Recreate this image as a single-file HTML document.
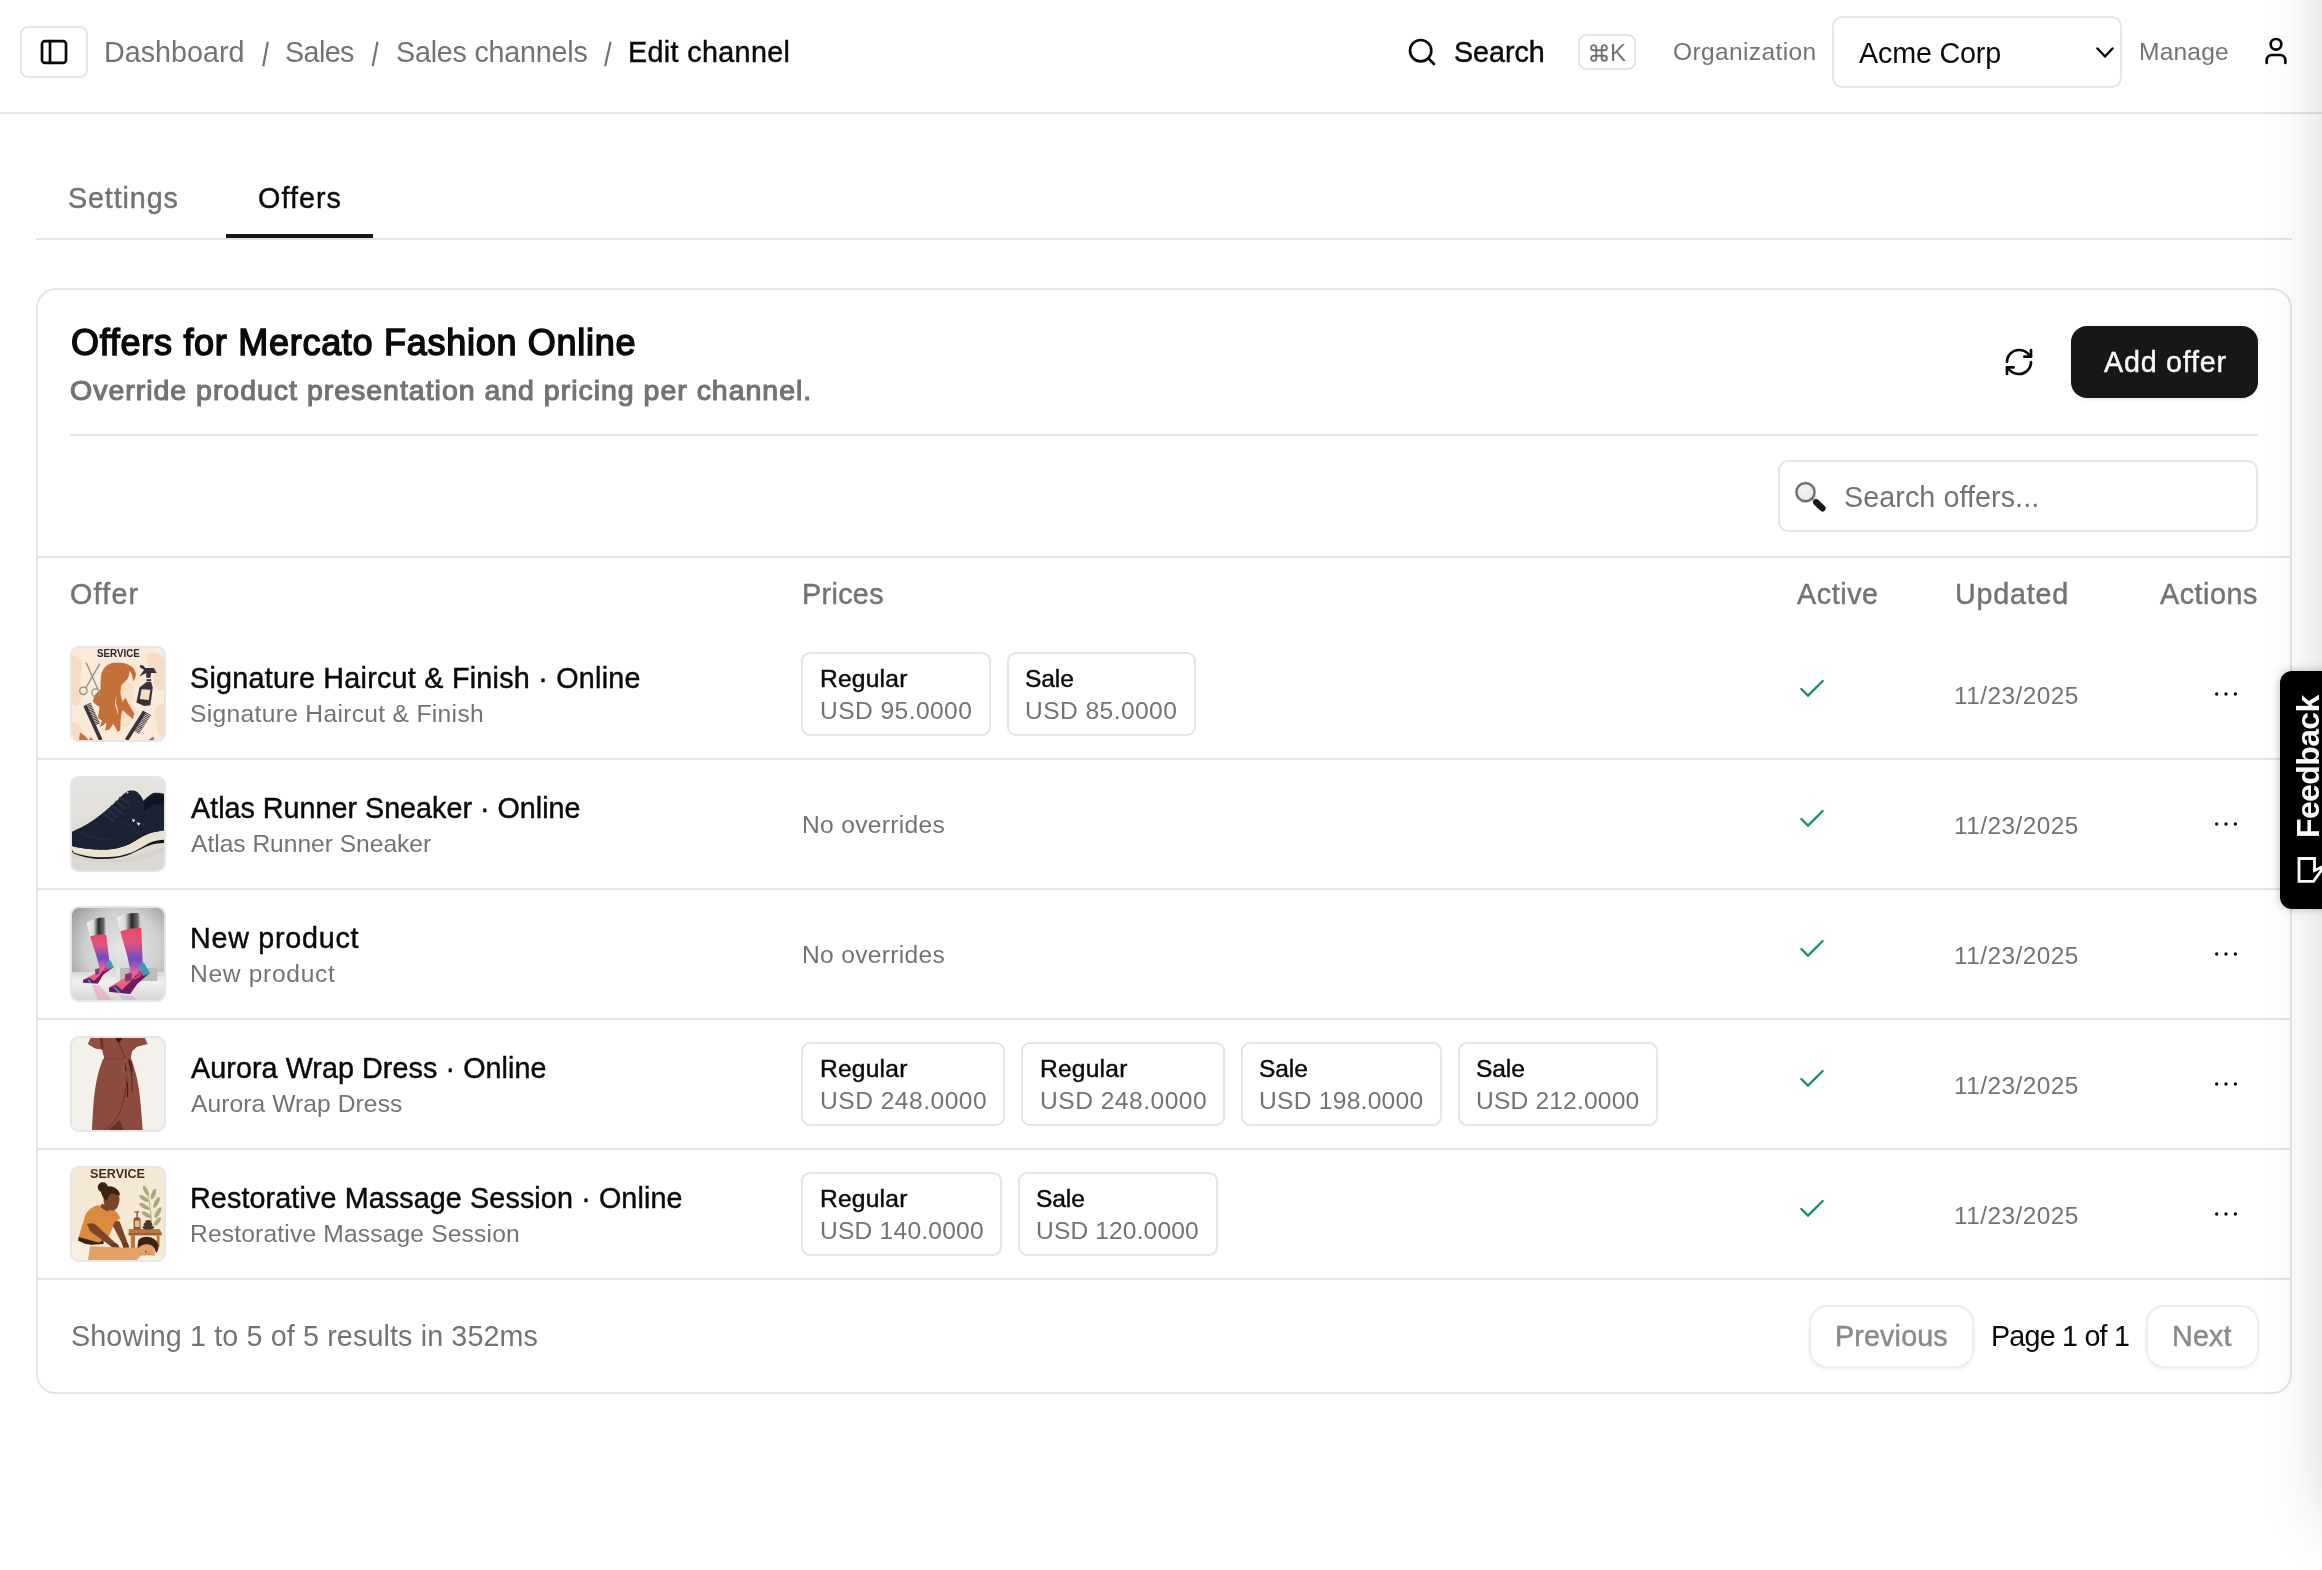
<!DOCTYPE html>
<html lang="en">
<head>
<meta charset="utf-8">
<title>Edit channel</title>
<style>
*{box-sizing:border-box;margin:0;padding:0}
html,body{width:2322px;height:1570px;overflow:hidden;background:#fff}
body{font-family:"Liberation Sans",sans-serif;color:#0a0a0a;position:relative;-webkit-font-smoothing:antialiased}
.a{position:absolute;white-space:pre;line-height:1;will-change:transform}
.t29{font-size:28.7px}
.t25{font-size:24.6px}
.g{color:#737373}
.m{-webkit-text-stroke:0.45px currentColor}
.hl{position:absolute;height:2px;background:#e5e5e5}
.box{position:absolute;border:2px solid #e5e5e5;background:#fff}
svg{position:absolute;overflow:visible;will-change:transform}
.ic{fill:none;stroke:#0a0a0a;stroke-width:2;stroke-linecap:round;stroke-linejoin:round}
.thumb{position:absolute;left:70px;width:96px;height:96px;border:2px solid #e5e5e5;border-radius:9px;overflow:hidden;background:#f5f5f5}
.thumb svg{left:0;top:0;width:92px;height:92px}
.chip{position:absolute;height:84px;border:2px solid #e5e5e5;border-radius:9px;background:#fff}
.chip .l{position:absolute;left:16px;top:13px;font-size:25px;line-height:1;white-space:pre;-webkit-text-stroke:0.45px currentColor}
.chip .v{position:absolute;left:16px;top:45px;font-size:25px;line-height:1;white-space:pre;color:#737373}
</style>
</head>
<body>

<!-- ===== HEADER ===== -->
<div class="hl" style="left:0;top:112px;width:2322px"></div>
<div class="box" style="left:20px;top:26px;width:68px;height:52px;border-radius:8px"></div>
<svg style="left:38px;top:36px" width="32" height="32" viewBox="0 0 24 24"><g class="ic"><rect x="3" y="3.8" width="18" height="16.4" rx="2.2"/><path d="M9 3.8v16.4"/></g></svg>

<div class="a t29 g" style="left:104.40px;top:38.4px;letter-spacing:0.027px">Dashboard</div>
<svg style="left:0;top:0" width="1" height="1"><path d="M267.8 41.800 263.3 66.300" stroke="#737373" stroke-width="2.200" fill="none"/></svg>
<div class="a t29 g" style="left:285.00px;top:38.4px;letter-spacing:-0.604px">Sales</div>
<svg style="left:0;top:0" width="1" height="1"><path d="M377.5 41.800 372.7 66.300" stroke="#737373" stroke-width="2.200" fill="none"/></svg>
<div class="a t29 g" style="left:395.50px;top:38.4px;letter-spacing:-0.217px">Sales channels</div>
<svg style="left:0;top:0" width="1" height="1"><path d="M610.6 41.800 605.1 66.300" stroke="#737373" stroke-width="2.200" fill="none"/></svg>
<div class="a t29 m" style="left:628.23px;top:38.4px;letter-spacing:0.366px">Edit channel</div>

<svg style="left:1406px;top:35.6px" width="32" height="32" viewBox="0 0 24 24"><g class="ic"><circle cx="11" cy="11" r="8"/><path d="m21 21-4.3-4.3"/></g></svg>
<div class="a t29 m" style="left:1454.02px;top:38.4px;letter-spacing:-0.018px">Search</div>
<div class="box" style="left:1577.6px;top:33.6px;width:58px;height:36px;border-radius:8px"></div>
<svg style="left:1588.2px;top:41.9px" width="22" height="22" viewBox="0 0 24 24"><path fill="none" stroke="#737373" stroke-width="2.1" d="M9 9h6v6H9zM9 9V6.2a2.8 2.8 0 1 0-2.8 2.8H9M15 9h2.8A2.8 2.8 0 1 0 15 6.200V9M15 15v2.8a2.8 2.8 0 1 0 2.8-2.8H15M9 15H6.2A2.8 2.8 0 1 0 9 17.8V15"/></svg>
<div class="a g" style="left:1609.7px;top:41.3px;font-size:24px">K</div>
<div class="a t25 g" style="left:1672.60px;top:40px;letter-spacing:0.339px">Organization</div>
<div class="box" style="left:1832px;top:16px;width:290px;height:72px;border-radius:10px"></div>
<div class="a t29" style="left:1859.20px;top:38.7px;letter-spacing:-0.166px">Acme Corp</div>
<svg style="left:2096px;top:47px" width="18" height="12" viewBox="0 0 18 12"><path d="M1.5 1.5 9 9.5 16.500 1.5" fill="none" stroke="#0a0a0a" stroke-width="2.4" stroke-linecap="round" stroke-linejoin="round"/></svg>
<div class="a t25 g" style="left:2138.80px;top:40px;letter-spacing:0.160px">Manage</div>
<svg style="left:2260px;top:35px" width="32" height="32" viewBox="0 0 24 24"><g class="ic"><path d="M19 21v-2a4 4 0 0 0-4-4H9a4 4 0 0 0-4 4v2"/><circle cx="12" cy="7" r="4"/></g></svg>

<!-- ===== TABS ===== -->
<div class="a t29 g m" style="left:67.72px;top:184px;letter-spacing:0.891px">Settings</div>
<div class="a t29 m" style="left:257.73px;top:184px;letter-spacing:1.061px">Offers</div>
<div class="hl" style="left:36px;top:238px;width:2256px"></div>
<div class="hl" style="left:226px;top:234px;width:147px;height:4px;background:#171717"></div>

<!-- ===== CARD ===== -->
<div class="box" style="left:36px;top:288px;width:2256px;height:1106px;border-radius:20px"></div>
<div class="a" style="left:70.65px;top:324.6px;font-size:36px;-webkit-text-stroke:1.5px currentColor;letter-spacing:0.717px">Offers for Mercato Fashion Online</div>
<div class="a g" style="left:70.48px;top:376px;font-size:28.5px;-webkit-text-stroke:1.15px currentColor;letter-spacing:0.983px">Override product presentation and pricing per channel.</div>
<svg style="left:2003px;top:346px" width="32" height="32" viewBox="0 0 24 24"><g class="ic"><path d="M3 12a9 9 0 0 1 9-9 9.750 9.750 0 0 1 6.740 2.740L21 8"/><path d="M21 3v5h-5"/><path d="M21 12a9 9 0 0 1-9 9 9.750 9.750 0 0 1-6.740-2.740L3 16"/><path d="M8 16H3v5"/></g></svg>
<div class="a" style="left:2071px;top:326px;width:187px;height:72px;border-radius:16px;background:#171717;box-shadow:0 2px 3px rgba(0,0,0,.08)"></div>
<div class="a t29 m" style="left:2103.62px;top:348.2px;color:#fafafa;letter-spacing:0.776px">Add offer</div>
<div class="hl" style="left:70px;top:434px;width:2188px"></div>

<div class="box" style="left:1778px;top:460px;width:480px;height:72px;border-radius:10px"></div>
<svg style="left:1793px;top:480px" width="34" height="34" viewBox="0 0 34 34"><defs><radialGradient id="lens" cx=".45" cy=".4" r=".6"><stop offset="0" stop-color="#f6f6f6"/><stop offset="1" stop-color="#e3e4e6"/></radialGradient></defs><path d="M19.500 19 22.500 21.700" stroke="#8d9197" stroke-width="3.600" stroke-linecap="butt"/><path d="M23.300 22.400 29.500 28.300" stroke="#17181a" stroke-width="6.300" stroke-linecap="round"/><circle cx="12.500" cy="12.200" r="9.200" fill="url(#lens)" stroke="#666b72" stroke-width="2.600"/><circle cx="12.500" cy="12.200" r="10.400" fill="none" stroke="#c9ccd1" stroke-width=".7"/></svg>
<div class="a t29 g" style="left:1844.00px;top:483.2px;letter-spacing:0.078px">Search offers...</div>
<div class="hl" style="left:38px;top:556px;width:2252px"></div>

<!-- table header -->
<div class="a t29 g m" style="left:70.22px;top:580.2px;letter-spacing:1.215px">Offer</div>
<div class="a t29 g m" style="left:802.02px;top:580.2px;letter-spacing:0.358px">Prices</div>
<div class="a t29 g m" style="left:1797.22px;top:580.2px;letter-spacing:0.577px">Active</div>
<div class="a t29 g m" style="left:1954.62px;top:580.2px;letter-spacing:0.774px">Updated</div>
<div class="a t29 g m" style="left:2160.22px;top:580.2px;letter-spacing:0.553px">Actions</div>

<!-- ROWS inserted here -->
<div class="thumb" style="top:646px"><svg viewBox="0 0 92 92"><rect width="92" height="92" fill="#fbead9"/>
<path d="M0 8C8 6 12 14 9 24 6 34 12 42 8 54 5 60 2 58 0 56Z" fill="#f6dcc2"/>
<path d="M74 6c8-4 16 0 18 6v30c-6 2-12-4-10-12 1-8-8-10-8-24z" fill="#f6dcc2"/>
<path d="M92 56c-8 0-12 8-8 16 3 8-2 14 8 18z" fill="#f6dcc2"/>
<path d="M0 74c8 0 12 6 10 18H0z" fill="#f6dcc2"/>
<path d="M50 34c6-2 12 2 12 8s-2 10-3 16c2 6 3 14-3 20-6 4-10 0-10-6z" fill="#f7dfc8"/>
<text x="46.400" y="8.800" font-family="Liberation Sans,sans-serif" font-weight="700" font-size="10.500" text-anchor="middle" textLength="43" lengthAdjust="spacingAndGlyphs" fill="#2e2630">SERVICE</text>
<path d="M39.900 15.100C44 14.500 48 14.500 51.100 15.100 56 16 60.500 18.500 62.300 21.400 63.800 24 64 26.500 63.700 28.400 63.200 30.500 62 32.300 60.900 33.300 60.800 29 59.800 25 57.400 22.800 57.600 26 57 29 55.300 31.200 53.500 33.500 51 35 49.700 36.800 48.500 40.500 48.200 44.500 49 48 49.500 50.500 50.200 53 51 55 50.500 53 51.500 51 53.900 50.200 56 55.500 59.500 60.500 62.300 65.600L60.900 71.200C57.500 68.500 54 65.500 51 62 49.800 64 49.200 66.500 49 69 48.300 73.500 48.500 78 48.300 82.400L45.500 83.800C44.200 81 42.800 78.500 41.300 76 40 78 38.500 80 37 81.700L32.900 82.400C33.800 80 34.300 77.300 34.300 74.700 32 76.500 29.800 78.200 27.300 79.600 28.500 77.500 29.500 75 30 72.600 28.300 71.800 27 70.500 25.900 69 26.800 65.500 27.500 62 27.300 58.600 25 57.500 22.800 55.800 21 53.700 21.500 51 22 48.800 23 46.700 24.800 44.500 27 42.800 28.700 41 28.400 36 28.500 30.500 29.400 25.600 31 20.500 35 16.500 39.900 15.100Z" fill="#c4703a"/>
<path d="M44.800 47c-1.500 4-2.600 8-1.200 12 1.200 3 2 6 1.600 9 1.200-3.500 1-6.500-.2-9.500-1.200-3.500-1-7.500-.2-11.500z" fill="#f1d2b4"/>
<g fill="none" stroke="#8d8d8f" stroke-width="1.300" stroke-linecap="round"><path d="M14.300 15.100 25.800 41"/><path d="M27.600 16.200 14 39.500"/><circle cx="11.400" cy="42.800" r="3.700"/><circle cx="23.700" cy="44.700" r="3.900"/></g>
<path d="M67.900 17.200h2.800l2.800 2.800h8.400l2.800 4.900h-5.600l-.7 4.900h-4.200v-4.900l-7 3.500 4.900-6.300-4.200-2.800z" fill="#3b3139"/>
<path d="M74.500 31.200h4.600v2.100h-4.600z" fill="#3b3139"/>
<path d="M74.500 34h4.600l1.700 5.600-2.400 17.600-6.300.7-7.700-3.500 3.100-14.800z" fill="#3b3139"/>
<path d="M69.600 41.300 78.400 41.800 76.800 52 67.800 51z" fill="#f6dcc2"/>
<g stroke="#3b3139" stroke-linecap="butt"><path d="M13 57.500 28.800 92" stroke-width="3.600"/><path d="M16.500 55.800 26 76.600" stroke-width="4.600" stroke-dasharray="0.9 0.75"/></g>
<g stroke="#3b3139" stroke-linecap="butt"><path d="M72.500 63.500 54.500 92" stroke-width="3.600"/><path d="M76.200 65.600 64.500 84.200" stroke-width="6.400" stroke-dasharray="0.9 0.75"/></g>
<path d="M7 92 8 84.500 13 88 16.500 92zM17 92l1.500-3 3 3z" fill="#c4703a"/>
<path d="M76.300 92 81.500 88.500 81.900 92z" fill="#8c7480"/>
</svg></div>
<div class="a t29 m" style="left:190.22px;top:663.7px;letter-spacing:0.260px">Signature Haircut &amp; Finish · Online</div>
<div class="a t25 g" style="left:190.00px;top:702.2px;letter-spacing:0.320px">Signature Haircut &amp; Finish</div>
<div class="chip" style="left:801px;top:652px;width:190px"></div>
<div class="a t25 m" style="left:819.83px;top:666.8px;letter-spacing:0.202px">Regular</div>
<div class="a t25 g" style="left:819.80px;top:698.7px;letter-spacing:0.422px">USD 95.0000</div>
<div class="chip" style="left:1006.6px;top:652px;width:189.4px"></div>
<div class="a t25 m" style="left:1025.32px;top:666.8px;letter-spacing:-0.132px">Sale</div>
<div class="a t25 g" style="left:1024.80px;top:698.7px;letter-spacing:0.422px">USD 85.0000</div>
<svg style="left:1796px;top:673px" width="32" height="32" viewBox="0 0 24 24"><path d="M20 6 9 17l-5-5" fill="none" stroke="#1f9060" stroke-width="1.780" stroke-linecap="round" stroke-linejoin="round"/></svg>
<div class="a g" style="left:1954.00px;top:683.6px;font-size:24.4px;letter-spacing:0.456px">11/23/2025</div>
<svg style="left:2210.300px;top:678.4px" width="32" height="32" viewBox="0 0 24 24"><g fill="#0a0a0a"><circle cx="5" cy="12" r="1.250"/><circle cx="12" cy="12" r="1.250"/><circle cx="19" cy="12" r="1.250"/></g></svg>
<div class="hl" style="left:38px;top:758px;width:2252px"></div>
<div class="thumb" style="top:776px"><svg viewBox="0 0 92 92"><defs><linearGradient id="sbg" x1="0" y1="0" x2="0" y2="1"><stop offset="0" stop-color="#e6e4e0"/><stop offset="1" stop-color="#dbd8d3"/></linearGradient></defs>
<rect width="92" height="92" fill="url(#sbg)"/>
<path d="M0 76c10 4 30 6 46 5 14-1 28-7 46-12v5C76 80 60 85 44 85 28 85 10 82 0 79z" fill="#d6d3cd"/>
<path d="M0 73.800 2 75.800C9 78.400 16 80 23 80.700c7 .5 14 .3 21-.6 5-.8 10-2 14.100-3.800 3.800-1.600 7-3.300 10.500-5 3.500-1.800 7-3.600 10.500-4.600 4-1 8.500-1.400 12.900-1.600V50L0 62z" fill="#11131a"/>
<path d="M0 67.700 2 68.800C9 70 16 71 23 71.600c7 .3 14 0 21-1.200 5-1 9.800-2.500 14.100-4.600 3.700-1.900 7-4.200 10.500-6.300 3.300-1.900 6.800-3.600 10.500-4.800 4-1 8.500-1.700 12.900-2.500v9.600c-4.400.3-8.900.8-12.900 2.400-3.700 1.500-7 3.700-10.500 5.700-3.400 1.800-6.700 3.700-10.500 5.200-4.300 1.600-9.100 2.800-14.100 3.500-7 .8-14 1-21 .5-7-.6-14-2-21-4.400L0 72z" fill="#e9e3d0"/>
<path d="M0 53.700C3 52 6 50.800 9 49.500 13.800 47 18.500 44.200 23 41 27.800 37.500 32.500 33.800 37 29.800 40.600 26.600 44.200 23.400 47.600 20 50.200 17.400 53 14.600 56 13 59 12.200 62.500 12.400 65 13.700 67.800 16 70 19.200 71.400 22.800 74.400 19.800 77.600 17 81.200 15.100 84.600 14.400 88.400 15 92 15.800V52.200C87.600 53 83.100 53.700 79.100 54.800 75.400 56 71.900 57.600 68.600 59.600 65.100 61.600 61.800 64 58.100 65.800 53.800 67.900 49 69.500 44 70.400 37 71.700 30 72 23 71.600 16 71.100 9 70 2 68.800L0 67.700Z" fill="#1b2234"/>
<path d="M72 23.500c3-3 6.500-5.500 10-6.500 3.500-.5 7 0 10 1v9c-4-1-8-1-11.500.5-3 1.500-6 3.500-8.500 6z" fill="#0f1522"/>
<g stroke="#262f45" stroke-width="2.200" stroke-linecap="round" fill="none"><path d="M40 28l9 7M36 32l9 7M32 36l9 7M44 24l9 6M48 20l9 5"/></g>
<g stroke="#2a334a" stroke-width="1" fill="none" opacity=".8"><path d="M8 54c8 4 18 8 30 8M52 44c6 2 12 6 14 12M58 40c6 2 12 5 16 10"/></g>
<path d="M59.800 41.300l3.600.5-2 2.600zM64.500 44.200l3.800 1-1.600 2.700z" fill="#f3f1ec"/>
<path d="M54 13.500l2.800.4-1.200 2z" fill="#c9ccd6"/>
</svg></div>
<div class="a t29 m" style="left:191.22px;top:793.7px;letter-spacing:0.015px">Atlas Runner Sneaker · Online</div>
<div class="a t25 g" style="left:191.00px;top:832.2px;letter-spacing:-0.022px">Atlas Runner Sneaker</div>
<div class="a t25 g" style="left:801.70px;top:813.2px;letter-spacing:0.307px">No overrides</div>
<svg style="left:1796px;top:803px" width="32" height="32" viewBox="0 0 24 24"><path d="M20 6 9 17l-5-5" fill="none" stroke="#1f9060" stroke-width="1.780" stroke-linecap="round" stroke-linejoin="round"/></svg>
<div class="a g" style="left:1954.00px;top:813.6px;font-size:24.4px;letter-spacing:0.456px">11/23/2025</div>
<svg style="left:2210.300px;top:808.4px" width="32" height="32" viewBox="0 0 24 24"><g fill="#0a0a0a"><circle cx="5" cy="12" r="1.250"/><circle cx="12" cy="12" r="1.250"/><circle cx="19" cy="12" r="1.250"/></g></svg>
<div class="hl" style="left:38px;top:888px;width:2252px"></div>
<div class="thumb" style="top:906px"><svg viewBox="0 0 92 92"><defs>
<radialGradient id="kbg" cx=".55" cy=".45" r=".75"><stop offset="0" stop-color="#e6e6e6"/><stop offset=".55" stop-color="#cfcfcf"/><stop offset="1" stop-color="#8e8e8e"/></radialGradient>
<linearGradient id="kfl" x1="0" y1="0" x2="0" y2="1"><stop offset="0" stop-color="#d9d9d9"/><stop offset=".35" stop-color="#f1f1f1"/><stop offset="1" stop-color="#d6d6d6"/></linearGradient>
<linearGradient id="ksk" x1="0" y1="0" x2="0" y2="1"><stop offset="0" stop-color="#e64a63"/><stop offset=".22" stop-color="#e4527f"/><stop offset=".48" stop-color="#6c4dc6"/><stop offset=".68" stop-color="#e763a6"/><stop offset=".85" stop-color="#f0607f"/><stop offset="1" stop-color="#e8507a"/></linearGradient>
<linearGradient id="kmt" x1="0" y1="0" x2="1" y2="0"><stop offset="0" stop-color="#f4f4f4"/><stop offset=".35" stop-color="#d8d8d8"/><stop offset=".6" stop-color="#2b2b2b"/><stop offset=".85" stop-color="#6b6b6b"/><stop offset="1" stop-color="#e8e8e8"/></linearGradient>
</defs>
<rect width="92" height="92" fill="url(#kbg)"/>
<rect y="64" width="92" height="28" fill="url(#kfl)"/>
<rect x="44" y="60" width="41.400" height="13" fill="#bdbdbd"/><rect x="44" y="60" width="4" height="13" fill="#e4e4e4"/>
<path d="M14.600 15.100C20 11 28 9 33.600 9.500L34.500 28 18.400 29.500Z" fill="url(#kmt)"/>
<path d="M44.800 9.500C52 5.500 61 4.500 67.200 5.300L69.300 21 48.500 24Z" fill="url(#kmt)"/>
<path d="M18.100 28.400C23 26.500 29 25.800 34.300 27L37.100 51.600 41.300 59.300 31.500 66.300 25.800 75.400 11.100 74.700 11.100 71.900 23 65.600 27.300 59.300 24.400 48.100Z" fill="url(#ksk)"/>
<path d="M48.300 23.500C54 21 63 19.500 69.300 20L70.700 53.700 77.700 64.900 65.100 76.100 58.100 85.900 37.100 83.800 37.100 79.600 53.900 69.100 58.100 62.100 55.300 48.100Z" fill="url(#ksk)"/>
<path d="M35 53.500 38.500 52.500 41.800 59.300 36 61.500 33.500 58.500z" fill="#2fa3b6"/>
<path d="M68.500 56 72 55 78 65 71.500 68 67.500 63z" fill="#2fa3b6"/>
<path d="M41.300 59.300 31.500 66.300 25.800 75.400 11.100 74.700 11.100 72 17 69.500 22 73 28 67 33.500 58.500 36 61.500z" fill="#6d1c63"/>
<path d="M77.700 64.900 65.100 76.100 58.100 85.900 37.100 83.800 37.100 80 44 77 50 82 58 74 67.500 63 71.500 68z" fill="#6d1c63"/>
<path d="M23 61 27.500 60.500 27 66 23.500 67z" fill="#8a3a62"/><path d="M53 66 60 65 59.500 72 53.500 74z" fill="#8a3a62"/>
<path d="M16 71.500l2.500 3.500" stroke="#33b6c8" stroke-width="1.300"/><path d="M42 79l6 6" stroke="#33b6c8" stroke-width="1.400"/>
<path d="M32 60l6-2M30 63l5-2" stroke="#e5457a" stroke-width="1.600"/><path d="M64 67l8-4M62 71l7-4" stroke="#e5457a" stroke-width="1.800"/>
<path d="M20 77 27 77 40 92 26 92z" fill="#e98db4" opacity=".45"/><path d="M47 87 60 88 66 92 50 92z" fill="#b9a4c8" opacity=".4"/>
</svg></div>
<div class="a t29 m" style="left:190.42px;top:923.7px;letter-spacing:0.748px">New product</div>
<div class="a t25 g" style="left:190.20px;top:962.2px;letter-spacing:0.677px">New product</div>
<div class="a t25 g" style="left:801.70px;top:943.2px;letter-spacing:0.307px">No overrides</div>
<svg style="left:1796px;top:933px" width="32" height="32" viewBox="0 0 24 24"><path d="M20 6 9 17l-5-5" fill="none" stroke="#1f9060" stroke-width="1.780" stroke-linecap="round" stroke-linejoin="round"/></svg>
<div class="a g" style="left:1954.00px;top:943.6px;font-size:24.4px;letter-spacing:0.456px">11/23/2025</div>
<svg style="left:2210.300px;top:938.4px" width="32" height="32" viewBox="0 0 24 24"><g fill="#0a0a0a"><circle cx="5" cy="12" r="1.250"/><circle cx="12" cy="12" r="1.250"/><circle cx="19" cy="12" r="1.250"/></g></svg>
<div class="hl" style="left:38px;top:1018px;width:2252px"></div>
<div class="thumb" style="top:1036px"><svg viewBox="0 0 92 92"><rect width="92" height="92" fill="#f4f0eb"/>
<path d="M18.800 0 16 6 23 10.200 30 11.600 32.200 20 30.800 21.400 27.300 31.200C25.500 38 24 45 23 51.600 22 58.500 21.400 65.500 21 72.600L19.900 92H70.700L68.600 65.600C67.800 57.500 66.600 49 65.100 41 63.800 35 62 29 60.200 23.500L58.800 20 60.200 13 65.100 8.800 75.600 6 72.800 0Z" fill="#8b4b3e"/>
<path d="M18.800 0 16 6l7 4.200 7 1.400-2-7.600 1.200-4z" fill="#94503f"/><path d="M27.500 0h3.200l.8 11.600-2.400-.6z" fill="#5d2a22" opacity=".7"/>
<path d="M43 0 47 5.500 50.500 0z" fill="#3d1712"/>
<path d="M47 5.500 53.200 20" stroke="#6e372c" stroke-width="1.100" fill="none"/>
<path d="M50.500 0 46.900 5.300" stroke="#6e372c" stroke-width=".9"/>
<path d="M32.200 20.500c8 .8 16 .3 21-.5" stroke="#7a3f33" stroke-width=".9" fill="none"/>
<path d="M53.200 20 50 34l2.800.6 2.400-13z" fill="#9a5646"/><path d="M53 21.500l1.600 11.500-1.800.3z" fill="#4f211a"/>
<path d="M55.500 20.500l4 3 1.500 10-2 .3-2.500-9z" fill="#5a261e"/>
<path d="M58.100 23.500c1.500 10 2.300 20 2.100 30.200" stroke="#5a261e" stroke-width="1.100" fill="none"/>
<path d="M54.600 37.500C55 50 52 64 46.900 76 43 84 38 88.500 32.900 91" stroke="#6b3328" stroke-width="1" fill="none"/>
<path d="M55.200 44c.6 5 .6 10 .1 15" stroke="#3d1712" stroke-width="1" fill="none"/>
<path d="M35 92c5-2.500 9-6 12-10.500 2 3 3.500 6 4.500 10.500z" fill="#6a3026"/>
</svg></div>
<div class="a t29 m" style="left:191.22px;top:1053.7px;letter-spacing:0.084px">Aurora Wrap Dress · Online</div>
<div class="a t25 g" style="left:191.00px;top:1092.2px;letter-spacing:0.080px">Aurora Wrap Dress</div>
<div class="chip" style="left:801px;top:1042px;width:204px"></div>
<div class="a t25 m" style="left:819.83px;top:1056.8px;letter-spacing:0.202px">Regular</div>
<div class="a t25 g" style="left:819.80px;top:1088.7px;letter-spacing:0.486px">USD 248.0000</div>
<div class="chip" style="left:1021px;top:1042px;width:204px"></div>
<div class="a t25 m" style="left:1039.62px;top:1056.8px;letter-spacing:0.202px">Regular</div>
<div class="a t25 g" style="left:1039.60px;top:1088.7px;letter-spacing:0.486px">USD 248.0000</div>
<div class="chip" style="left:1241px;top:1042px;width:201px"></div>
<div class="a t25 m" style="left:1259.12px;top:1056.8px;letter-spacing:-0.132px">Sale</div>
<div class="a t25 g" style="left:1258.60px;top:1088.7px;letter-spacing:0.258px">USD 198.0000</div>
<div class="chip" style="left:1458px;top:1042px;width:200px"></div>
<div class="a t25 m" style="left:1476.12px;top:1056.8px;letter-spacing:-0.132px">Sale</div>
<div class="a t25 g" style="left:1475.60px;top:1088.7px;letter-spacing:0.167px">USD 212.0000</div>
<svg style="left:1796px;top:1063px" width="32" height="32" viewBox="0 0 24 24"><path d="M20 6 9 17l-5-5" fill="none" stroke="#1f9060" stroke-width="1.780" stroke-linecap="round" stroke-linejoin="round"/></svg>
<div class="a g" style="left:1954.00px;top:1073.6px;font-size:24.4px;letter-spacing:0.456px">11/23/2025</div>
<svg style="left:2210.300px;top:1068.4px" width="32" height="32" viewBox="0 0 24 24"><g fill="#0a0a0a"><circle cx="5" cy="12" r="1.250"/><circle cx="12" cy="12" r="1.250"/><circle cx="19" cy="12" r="1.250"/></g></svg>
<div class="hl" style="left:38px;top:1148px;width:2252px"></div>
<div class="thumb" style="top:1166px"><svg viewBox="0 0 92 92"><rect width="92" height="92" fill="#f5e9d5"/>
<text x="45.500" y="9.900" font-family="Liberation Sans,sans-serif" font-weight="700" font-size="12.500" text-anchor="middle" textLength="55" lengthAdjust="spacingAndGlyphs" fill="#4b2a1d">SERVICE</text>
<g stroke="#a9a87e" stroke-width=".9" fill="none"><path d="M79.500 56C79 45 77.500 33 75.600 23.500"/></g>
<g fill="#a9a87e"><ellipse cx="73.800" cy="22.500" rx="2" ry="5.500" transform="rotate(-25 73.800 22.500)"/><ellipse cx="81.500" cy="26" rx="2" ry="5.500" transform="rotate(22 81.500 26)"/><ellipse cx="72" cy="30.500" rx="2" ry="5.500" transform="rotate(-58 72 30.500)"/><ellipse cx="84.500" cy="34.500" rx="2.100" ry="6" transform="rotate(28 84.500 34.500)"/><ellipse cx="72.500" cy="38.500" rx="2.100" ry="6" transform="rotate(-60 72.500 38.500)"/><ellipse cx="86" cy="44.500" rx="2.100" ry="6" transform="rotate(30 86 44.500)"/><ellipse cx="74.500" cy="46.800" rx="2.100" ry="5.500" transform="rotate(-58 74.500 46.800)"/><ellipse cx="85.500" cy="53.500" rx="2" ry="5" transform="rotate(35 85.500 53.500)"/></g>
<path d="M56.700 61H87.500l2.100 4v2.300H56.700z" fill="#b87840"/><path d="M56.700 65h32.900v2.300H56.700z" fill="#9a5f30"/>
<path d="M58.800 67.300h4.200V80h-4.200zM84.700 67.300h2.800V79h-2.800z" fill="#b87840"/>
<path d="M61.600 52c0-2 1-2.800 2.500-2.800h2c1.500 0 2.500.8 2.500 2.800v9.400h-7z" fill="#8b5631"/><rect x="63" y="52.500" width="4.500" height="6.500" fill="#ecbf90"/>
<path d="M64.400 44h1.400v5.500h-1.400z" fill="#8b5631"/><path d="M62.300 43.200h4.900v1.200h-4.900z" fill="#8b5631"/>
<ellipse cx="76.300" cy="59.300" rx="5.800" ry="2.300" fill="#4b3529"/><ellipse cx="76" cy="56.300" rx="4.400" ry="2" fill="#4b3529"/><ellipse cx="76.200" cy="53.600" rx="3" ry="1.600" fill="#4b3529"/>
<path d="M6.900 68.400 31.500 70v6L16 77 6 72.500z" fill="#3b2116"/>
<path d="M14.600 44.600C18 41 21 38.500 24.400 37.500 30 37 36 38.500 41.300 41 44.500 43.500 47 47 48.300 50.200L42.700 55.100 37.100 67.700 27.300 74.700 6.900 69.100C8 64 9.500 59.500 11.100 55.100 12 51 13 47.500 14.600 44.600Z" fill="#da8b3e"/>
<path d="M30 35.500 37 39.500 36.500 43.500C33.500 43 31 41.500 28.500 38.500z" fill="#7b4627"/>
<path d="M33.500 24c4-2 9-1.500 12 1.500 2 2.500 2.500 6 1.500 9.500l-1.500 4c-1 2.500-3.500 4-6.500 3.500-3.500-.8-6-3.500-7-7-1-4-.5-8.500 1.500-11.500z" fill="#7b4627"/>
<circle cx="30.800" cy="19.300" r="5" fill="#3b2116"/>
<path d="M28.500 22c3-3.500 9-5 14-2.500 3 1.500 5.500 4.500 5.500 8-3-.5-5.500-1-8-2.500-2 1.500-4 3.500-4.500 6.500l-2 1c-2.500-3-4.500-6.500-5-10.500z" fill="#3b2116"/>
<path d="M15 56c3-1.200 6-1 8.500.5L44 75.500l-3.500 4L18 63z" fill="#7b4627"/>
<path d="M42.700 54c1.500-1.200 3.500-1.500 5-.5L56 76l-4 3.500L41 58z" fill="#7b4627"/>
<path d="M38 75.500c3-1.500 6-1 8 1l1.500 3.500-7 1zM50 75c2.500-1 5-.5 6.500 1.500l.8 3-6 .8z" fill="#6a3a20"/>
<path d="M0 74.700 18.100 76.500 16 92H0z" fill="#f8f0e2"/>
<path d="M18.100 78.200 67.200 80.300 65.100 92H16z" fill="#e3a167"/>
<path d="M64 80c3-3.500 7-5 11-4.500 4 .8 7.500 4 8 8.500.3 3.500-1.500 6.500-4.500 8H66z" fill="#e3a167"/>
<path d="M66.500 72c3-3 8-4 12.500-2.500 4 1.200 7 4.500 7.500 8.500.3 3-1 5.500-2.500 7-.5-4-3-7.500-7-8.500-4-.8-8 .5-11 3.500-.8-3 0-6 .5-8z" fill="#3b2116"/>
<path d="M73 83l2 1.500M72 88l2.200-1.200M76.500 87.500l1.500-1" stroke="#3b2116" stroke-width=".8" fill="none"/>
<path d="M68 88c4-1 10-1 24 1v3H66z" fill="#f8f0e2"/>
</svg></div>
<div class="a t29 m" style="left:190.42px;top:1183.7px;letter-spacing:0.131px">Restorative Massage Session · Online</div>
<div class="a t25 g" style="left:190.20px;top:1222.2px;letter-spacing:0.167px">Restorative Massage Session</div>
<div class="chip" style="left:801px;top:1172px;width:201px"></div>
<div class="a t25 m" style="left:819.83px;top:1186.8px;letter-spacing:0.202px">Regular</div>
<div class="a t25 g" style="left:819.80px;top:1218.7px;letter-spacing:0.213px">USD 140.0000</div>
<div class="chip" style="left:1018px;top:1172px;width:200px"></div>
<div class="a t25 m" style="left:1036.12px;top:1186.8px;letter-spacing:-0.132px">Sale</div>
<div class="a t25 g" style="left:1035.60px;top:1218.7px;letter-spacing:0.122px">USD 120.0000</div>
<svg style="left:1796px;top:1193px" width="32" height="32" viewBox="0 0 24 24"><path d="M20 6 9 17l-5-5" fill="none" stroke="#1f9060" stroke-width="1.780" stroke-linecap="round" stroke-linejoin="round"/></svg>
<div class="a g" style="left:1954.00px;top:1203.6px;font-size:24.4px;letter-spacing:0.456px">11/23/2025</div>
<svg style="left:2210.300px;top:1198.4px" width="32" height="32" viewBox="0 0 24 24"><g fill="#0a0a0a"><circle cx="5" cy="12" r="1.250"/><circle cx="12" cy="12" r="1.250"/><circle cx="19" cy="12" r="1.250"/></g></svg>
<div class="hl" style="left:38px;top:1278px;width:2252px"></div>

<!-- footer -->
<div class="a t29 g" style="left:70.60px;top:1322px;letter-spacing:0.129px">Showing 1 to 5 of 5 results in 352ms</div>
<div class="a" style="left:1808.5px;top:1304.5px;width:165px;height:63px;border-radius:18px;border:2px solid #ededed;background:#fff;box-shadow:0 2px 4px rgba(0,0,0,.06)"></div>
<div class="a t29 m" style="left:1834.92px;top:1322px;color:#8a8a8a;letter-spacing:0.154px">Previous</div>
<div class="a t29" style="left:1990.50px;top:1322px;letter-spacing:-0.779px">Page 1 of 1</div>
<div class="a" style="left:2145.5px;top:1304.5px;width:113px;height:63px;border-radius:18px;border:2px solid #ededed;background:#fff;box-shadow:0 2px 4px rgba(0,0,0,.06)"></div>
<div class="a t29 m" style="left:2171.72px;top:1322px;color:#8a8a8a;letter-spacing:0.178px">Next</div>

<!-- right edge shading -->
<div style="position:absolute;left:2332px;top:-200px;width:100px;height:1722px;box-shadow:0 0 70px rgba(0,0,0,.2)"></div>

<!-- feedback tab -->
<div class="a" style="left:2280px;top:671px;width:60px;height:238px;background:#000;border-radius:12px 0 0 12px;box-shadow:0 0 10px rgba(0,0,0,.25)"></div>
<div class="a" style="left:2291.4px;top:838.3px;width:143px;height:34px;transform-origin:0 0;transform:rotate(-90deg);color:#fafafa;font-weight:700;font-size:32px;line-height:34px;letter-spacing:-0.62px">Feedback</div>
<svg style="left:2297px;top:857px" width="30" height="27" viewBox="0 0 30 27"><path d="M26 9.500 17.500 13.500V1.500H2V24.400H16.500L26 11" fill="none" stroke="#fafafa" stroke-width="2.800" stroke-linejoin="miter"/></svg>

</body>
</html>
